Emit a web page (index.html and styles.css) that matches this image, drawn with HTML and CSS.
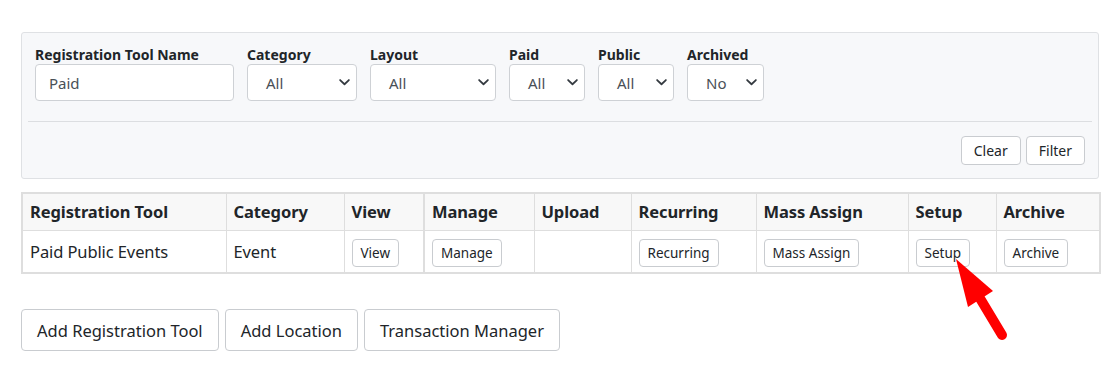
FILE: index.html
```html
<!DOCTYPE html>
<html>
<head>
<meta charset="utf-8">
<link rel="stylesheet" href="styles.css">
</head>
<body>
<div class="page">
  <div class="filter-panel">
    <div class="filter-row">
      <div class="field">
        <label class="field-label">Registration Tool Name</label>
        <div class="text-input w-name">Paid</div>
      </div>
      <div class="field">
        <label class="field-label">Category</label>
        <div class="select w-cat"><span>All</span><svg class="chev" viewBox="0 0 12 8" width="11" height="7"><path d="M1 1.2 L6 6 L11 1.2" fill="none" stroke="#343a40" stroke-width="2" stroke-linecap="round" stroke-linejoin="round"/></svg></div>
      </div>
      <div class="field">
        <label class="field-label">Layout</label>
        <div class="select w-layout"><span>All</span><svg class="chev" viewBox="0 0 12 8" width="11" height="7"><path d="M1 1.2 L6 6 L11 1.2" fill="none" stroke="#343a40" stroke-width="2" stroke-linecap="round" stroke-linejoin="round"/></svg></div>
      </div>
      <div class="field">
        <label class="field-label">Paid</label>
        <div class="select w-small"><span>All</span><svg class="chev" viewBox="0 0 12 8" width="11" height="7"><path d="M1 1.2 L6 6 L11 1.2" fill="none" stroke="#343a40" stroke-width="2" stroke-linecap="round" stroke-linejoin="round"/></svg></div>
      </div>
      <div class="field">
        <label class="field-label">Public</label>
        <div class="select w-small"><span>All</span><svg class="chev" viewBox="0 0 12 8" width="11" height="7"><path d="M1 1.2 L6 6 L11 1.2" fill="none" stroke="#343a40" stroke-width="2" stroke-linecap="round" stroke-linejoin="round"/></svg></div>
      </div>
      <div class="field">
        <label class="field-label">Archived</label>
        <div class="select w-small2"><span>No</span><svg class="chev" viewBox="0 0 12 8" width="11" height="7"><path d="M1 1.2 L6 6 L11 1.2" fill="none" stroke="#343a40" stroke-width="2" stroke-linecap="round" stroke-linejoin="round"/></svg></div>
      </div>
    </div>
    <hr class="divider">
    <div class="filter-actions">
      <button class="btn btn-sm">Clear</button>
      <button class="btn btn-sm">Filter</button>
    </div>
  </div>

  <div class="table-wrap">
    <table class="grid">
      <colgroup>
        <col class="c1"><col class="c2"><col class="c3"><col class="c4"><col class="c5"><col class="c6"><col class="c7"><col class="c8"><col class="c9">
      </colgroup>
      <thead>
        <tr>
          <th>Registration Tool</th>
          <th>Category</th>
          <th class="thick-right">View</th>
          <th>Manage</th>
          <th>Upload</th>
          <th>Recurring</th>
          <th>Mass Assign</th>
          <th>Setup</th>
          <th>Archive</th>
        </tr>
      </thead>
      <tbody>
        <tr>
          <td>Paid Public Events</td>
          <td>Event</td>
          <td class="thick-right btn-cell"><button class="btn btn-xs">View</button></td>
          <td class="btn-cell"><button class="btn btn-xs">Manage</button></td>
          <td></td>
          <td class="btn-cell"><button class="btn btn-xs">Recurring</button></td>
          <td class="btn-cell"><button class="btn btn-xs">Mass Assign</button></td>
          <td class="btn-cell"><button class="btn btn-xs">Setup</button></td>
          <td class="btn-cell"><button class="btn btn-xs">Archive</button></td>
        </tr>
      </tbody>
    </table>
    <svg class="arrow" viewBox="0 0 60 90" width="60" height="90">
      <path d="M2 2 L14 50 L39 34 Z" fill="#ff0000"/>
      <path d="M24 38 L48 78" stroke="#ff0000" stroke-width="10" stroke-linecap="round" fill="none"/>
    </svg>
  </div>

  <div class="bottom-actions">
    <button class="btn btn-lg">Add Registration Tool</button>
    <button class="btn btn-lg">Add Location</button>
    <button class="btn btn-lg">Transaction Manager</button>
  </div>
</div>
</body>
</html>
```

FILE: styles.css
```css
* { box-sizing: border-box; }

html, body {
  margin: 0;
  padding: 0;
  background: #ffffff;
}

body {
  font-family: "Noto Sans", "Open Sans", sans-serif;
  color: #212529;
}

.page {
  width: 1078px;
  margin-left: 21px;
  padding-top: 32px;
}

.filter-panel {
  background: #f7f8fa;
  border: 1px solid #dfe1e4;
  border-radius: 3px;
  padding: 12px 6px 13px 6px;
}

.filter-row {
  display: flex;
  gap: 13px;
  padding: 0 7px;
}

.field {
  display: flex;
  flex-direction: column;
}

.field-label {
  font-size: 14px;
  font-weight: 700;
  line-height: 19px;
  color: #212529;
}

.text-input,
.select {
  height: 37px;
  background: #ffffff;
  border: 1px solid #ced1d5;
  border-radius: 4px;
  font-size: 15px;
  color: #495057;
  display: flex;
  align-items: center;
}

.text-input {
  padding-left: 13px;
}

.select {
  padding-left: 18px;
  padding-right: 6px;
  justify-content: space-between;
}

.chev { display: block; }

.w-name { width: 199px; }
.w-cat { width: 110px; }
.w-layout { width: 126px; }
.w-small { width: 76px; }
.w-small2 { width: 77px; }

.divider {
  border: 0;
  border-top: 1px solid #dcdee1;
  margin: 20px 0 14px 0;
}

.filter-actions {
  display: flex;
  justify-content: flex-end;
  gap: 5px;
  padding-right: 7px;
}

.btn {
  font-family: "Noto Sans", "Open Sans", sans-serif;
  background: #ffffff;
  border: 1px solid #c9ccd0;
  border-radius: 4px;
  color: #212529;
  cursor: pointer;
  padding: 0;
}

.btn-sm {
  height: 29px;
  padding: 0 12px;
  font-size: 14px;
}

.btn-xs {
  height: 28px;
  padding: 0 8px;
  font-size: 13.5px;
  vertical-align: middle;
}

.btn-lg {
  height: 42px;
  padding: 0 15px;
  font-size: 16.5px;
}

.table-wrap {
  position: relative;
  margin-top: 13px;
}

.grid {
  width: 1078px;
  border-collapse: collapse;
  table-layout: fixed;
  border: 2px solid #dedede;
}

.c1 { width: 204px; }
.c2 { width: 118px; }
.c3 { width: 80px; }
.c4 { width: 110px; }
.c5 { width: 97px; }
.c6 { width: 125px; }
.c7 { width: 152px; }
.c8 { width: 88px; }
.c9 { width: 104px; }

.grid th,
.grid td {
  border: 1px solid #dedede;
  text-align: left;
  padding: 0 7px;
  white-space: nowrap;
}

.grid .thick-right {
  border-right: 2px solid #dedede;
}

.grid th {
  background: #f8f8f8;
  font-size: 16.5px;
  font-weight: 700;
  height: 37px;
  letter-spacing: -0.1px;
}

.grid td {
  font-size: 16.5px;
  height: 43px;
  letter-spacing: -0.1px;
}

.grid td.btn-cell {
  padding-top: 3px;
}

.arrow {
  position: absolute;
  left: 933px;
  top: 65px;
}

.bottom-actions {
  display: flex;
  gap: 6px;
  margin-top: 35px;
}
```
